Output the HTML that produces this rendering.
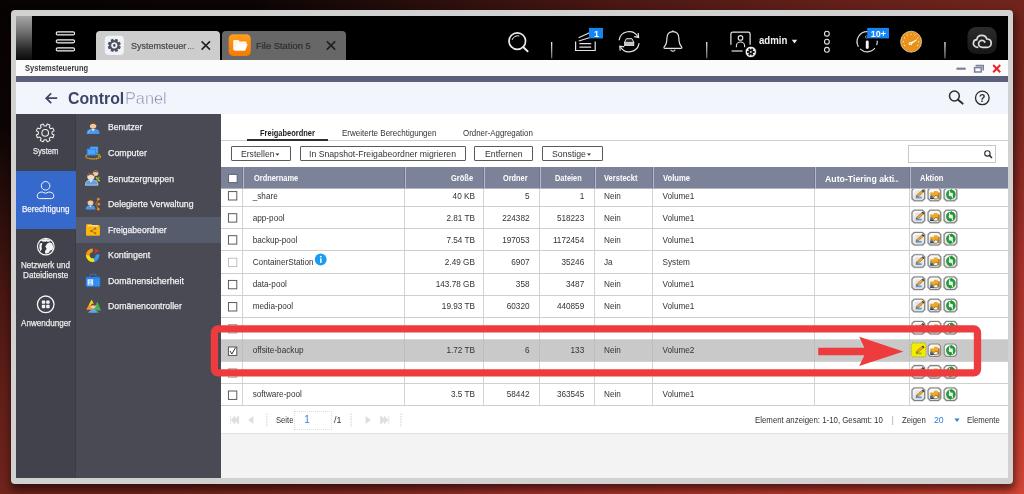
<!DOCTYPE html>
<html lang="de"><head><meta charset="utf-8"><title>Systemsteuerung</title><style>
*{box-sizing:border-box;margin:0;padding:0}
html,body{width:1024px;height:494px;overflow:hidden}
body{position:relative;font-family:"Liberation Sans",sans-serif;
 background:radial-gradient(ellipse 1024px 494px at 0 0,#070303 0%,#0c0505 25%,#260d0b 40%,#4a1713 60%,#611f19 80%,#70241c 100%,#a3312a 112%,#c53d2f 132%,#d24636 141%);}
.abs,.t,svg{position:absolute}
.t{white-space:nowrap;line-height:1;transform-origin:0 50%;}
#frame{left:11px;top:10px;width:1002px;height:474px;background:#d1d1d1;border-radius:4px;box-shadow:1px 5px 9px 1px rgba(15,0,0,.6)}
#inner{left:16px;top:16px;width:992px;height:462px;background:#fff;overflow:hidden}
#topbar{left:16px;top:16px;width:992px;height:44px;background:#000}
#grad{left:16px;top:16px;width:16px;height:44px;background:linear-gradient(#a6a6a6 0%,#8a8a8a 20%,#585858 50%,#2a2a2a 76%,#0a0a0a 100%)}
#tab1{left:96px;top:31px;width:124px;height:29px;background:#cdcdcd;border-radius:4px 4px 0 0}
#tab2{left:221.5px;top:31px;width:124.5px;height:29px;background:#676767;border-radius:4px 4px 0 0}
#titlestrip{left:16px;top:60px;width:992px;height:16px;background:#fbfbfb}
#darkline{left:16px;top:76px;width:992px;height:6px;background:#5b5f79}
#header{left:16px;top:82px;width:992px;height:32px;background:#f2f5fc}
#side1{left:16px;top:114px;width:60px;height:364px;background:#41424b;border-right:1.5px solid #3b3c44}
#side1sel{left:16px;top:171px;width:60px;height:58px;background:#3569cc}
#side2{left:76px;top:114px;width:145px;height:364px;background:#494a54}
#side2sel{left:76px;top:217px;width:145px;height:25.5px;background:#575c6d}
#content{left:221px;top:114px;width:787px;height:364px;background:#fff}
#tabline{left:221px;top:140px;width:787px;height:1px;background:#cfcfcf}
#tabul{left:247px;top:139px;width:81px;height:2px;background:#2f2f2f}
.btn{height:15px;top:146px;border:1px solid #5a5a5a;background:#fff;border-radius:1px}
#thead{left:221px;top:167px;width:787px;height:22px;background:#7c8298;border-bottom:1px solid #b0b4c4}
.hsep{top:167px;width:1px;height:21px;background:#b4b8c8}
.csep{top:189px;width:1px;height:217px;background:#d4d4d4}
.rsep{left:221px;width:787px;height:1px;background:#cfcfcf}
.cb{width:9px;height:9px;border:1px solid #4a4a4a;background:#fff;left:228px}
#pager{left:221px;top:406px;width:787px;height:27px;background:#fff}
#below{left:221px;top:433px;width:787px;height:45px;background:#f3f3f3;border-top:1px solid #e2e2e2}
#searchbox{left:908px;top:145px;width:88px;height:17.5px;border:1px solid #c8c8c8;background:#fff}
#pginput{left:293.5px;top:410.5px;width:38px;height:19px;border:1px dotted #dcdcdc;background:#fff}
</style></head><body>
<div id="frame" class="abs"></div>
<div id="inner" class="abs"></div>
<div id="topbar" class="abs"></div><div id="grad" class="abs"></div>
<div id="tab1" class="abs"></div><div id="tab2" class="abs"></div>
<div id="titlestrip" class="abs"></div><div id="darkline" class="abs"></div><div id="header" class="abs"></div>
<div id="side1" class="abs"></div><div id="side1sel" class="abs"></div>
<div id="side2" class="abs"></div><div id="side2sel" class="abs"></div>
<div id="content" class="abs"></div>
<div id="tabline" class="abs"></div><div id="tabul" class="abs"></div>
<div class="abs btn" style="left:230.7px;width:60.30000000000001px"></div>
<div class="abs btn" style="left:299.5px;width:166.0px"></div>
<div class="abs btn" style="left:474px;width:59px"></div>
<div class="abs btn" style="left:542px;width:61px"></div>
<div id="searchbox" class="abs"></div>
<div id="thead" class="abs"></div>
<div class="abs hsep" style="left:243px"></div><div class="abs hsep" style="left:242px;background:#6f7590"></div>
<div class="abs csep" style="left:242px"></div>
<div class="abs hsep" style="left:405px"></div><div class="abs hsep" style="left:404px;background:#6f7590"></div>
<div class="abs csep" style="left:404px"></div>
<div class="abs hsep" style="left:484px"></div><div class="abs hsep" style="left:483px;background:#6f7590"></div>
<div class="abs csep" style="left:483px"></div>
<div class="abs hsep" style="left:540px"></div><div class="abs hsep" style="left:539px;background:#6f7590"></div>
<div class="abs csep" style="left:539px"></div>
<div class="abs hsep" style="left:595px"></div><div class="abs hsep" style="left:594px;background:#6f7590"></div>
<div class="abs csep" style="left:594px"></div>
<div class="abs hsep" style="left:653px"></div><div class="abs hsep" style="left:652px;background:#6f7590"></div>
<div class="abs csep" style="left:652px"></div>
<div class="abs hsep" style="left:815px"></div><div class="abs hsep" style="left:814px;background:#6f7590"></div>
<div class="abs csep" style="left:814px"></div>
<div class="abs hsep" style="left:910px"></div><div class="abs hsep" style="left:909px;background:#6f7590"></div>
<div class="abs csep" style="left:909px"></div>
<div class="abs rsep" style="top:206.0px"></div>
<div class="abs rsep" style="top:228.0px"></div>
<div class="abs rsep" style="top:250.0px"></div>
<div class="abs rsep" style="top:273.0px"></div>
<div class="abs rsep" style="top:295.0px"></div>
<div class="abs rsep" style="top:317.0px"></div>
<div class="abs rsep" style="top:383.0px"></div>
<div class="abs rsep" style="top:405.0px"></div>
<div id="pager" class="abs"></div><div id="below" class="abs"></div>
<div id="pginput" class="abs"></div>
<svg style="left:0;top:0;will-change:transform" width="1024" height="494" viewBox="0 0 1024 494" font-family="Liberation Sans, sans-serif">
<defs>
<linearGradient id="gb" x1="0" y1="0" x2="0" y2="1"><stop offset="0" stop-color="#fdfdfd"/><stop offset="1" stop-color="#dedede"/></linearGradient>
<linearGradient id="gy" x1="0" y1="0" x2="0" y2="1"><stop offset="0" stop-color="#f7f23a"/><stop offset="1" stop-color="#e6d800"/></linearGradient>
<linearGradient id="go" x1="0" y1="0" x2="0" y2="1"><stop offset="0" stop-color="#ff9d1e"/><stop offset="1" stop-color="#f57a00"/></linearGradient>
<linearGradient id="gc" x1="0" y1="0" x2="0" y2="1"><stop offset="0" stop-color="#2c2c2c"/><stop offset="1" stop-color="#161616"/></linearGradient>
<linearGradient id="gs" x1="0" y1="0" x2="0" y2="1"><stop offset="0" stop-color="#f0f0f0"/><stop offset="1" stop-color="#666"/></linearGradient>
<g id="pencil"><rect x="4.4" y="3.5" width="6.6" height="7.6" fill="#dbe4ef"/><rect x="4.7" y="9.5" width="5.9" height="1.7" fill="#4aa0e8"/><path d="M11.7 4.1 L6.2 8.9" stroke="#9a6a1c" stroke-width="2.5"/><path d="M11.7 4.1 L6.2 8.9" stroke="#f2aa34" stroke-width="1.6"/><path d="M12.6 3.3 L11.5 4.3" stroke="#4e3220" stroke-width="2.4"/><path d="M6.4 8.7 L5.2 9.8" stroke="#d0503a" stroke-width="1.7"/><circle cx="5.4" cy="8.6" r=".6" fill="#4aa648"/></g>
<g id="pencily"><rect x="4.7" y="9.6" width="5.9" height="1.6" fill="#8ab82a"/><path d="M11.7 4.1 L6.2 8.9" stroke="#9a6a1c" stroke-width="2.5"/><path d="M11.7 4.1 L6.2 8.9" stroke="#f2aa34" stroke-width="1.6"/><path d="M12.6 3.3 L11.5 4.3" stroke="#4e3220" stroke-width="2.4"/><path d="M6.4 8.7 L5.2 9.8" stroke="#d0503a" stroke-width="1.7"/></g>
<g id="fold"><path d="M3.1 5.4 L3.1 11.6 L12.2 11.6 L12.2 5.2 L10.8 5.2 L10.3 3.8 L7.2 3.8 L6.6 5.4 Z" fill="#f5a623"/><path d="M11.5 5.2 H12.3 V11.6 H11.5 Z" fill="#6e4a1c"/><rect x="3.1" y="8.9" width="2.7" height="2.6" fill="#3a70c8"/><rect x="3.1" y="10.9" width="4" height=".8" fill="#222"/><circle cx="4.5" cy="8.3" r=".8" fill="#49a83c"/><path d="M6.2 10.2 L8.4 8.5 L10.6 8.7 L11 10.4 L9.2 11.8 L6.8 11.6 Z" fill="#f6f2e4" stroke="#4a4030" stroke-width=".55"/></g>
<g id="refr"><circle cx="7.7" cy="7.3" r="3.5" fill="none" stroke="#239c38" stroke-width="2.6"/><path d="M7.9 1.7 L11.6 4.4 L7.2 5.8 Z M7.5 12.9 L3.8 10.2 L8.2 8.8 Z" fill="#1f9a35"/><path d="M6.2 3.6 Q6.4 6.4 8 7.4 Q9.4 8.4 9.4 11" fill="none" stroke="#f4f4f4" stroke-width="1.1"/></g>
<g id="abtn"><path d="M2.8 .3 H11.8 L14.3 2.8 V11.7 L11.8 14.2 H2.8 L.3 11.7 V2.8 Z" fill="#d9d9d9" stroke="#d9d9d9" stroke-width=".8" stroke-linejoin="round"/><path d="M3.2 1 H11.4 L13.6 3.2 V11.3 L11.4 13.5 H3.2 L1 11.3 V3.2 Z" fill="url(#gb)" stroke="#808080" stroke-width="1.1" stroke-linejoin="round"/></g>
<g id="abtny"><rect x=".2" y="0" width="14.6" height="13.8" rx="1.6" fill="#f1ee00" stroke="#9c9a10" stroke-width=".8" stroke-dasharray="1 .8"/></g>
</defs>
<rect x="221" y="339.3" width="787" height="22.5" fill="#c9c9c9"/>
<rect x="242" y="339.3" width="1" height="22.5" fill="#bdbdbd"/>
<rect x="404" y="339.3" width="1" height="22.5" fill="#bdbdbd"/>
<rect x="483" y="339.3" width="1" height="22.5" fill="#bdbdbd"/>
<rect x="539" y="339.3" width="1" height="22.5" fill="#bdbdbd"/>
<rect x="594" y="339.3" width="1" height="22.5" fill="#bdbdbd"/>
<rect x="652" y="339.3" width="1" height="22.5" fill="#bdbdbd"/>
<rect x="814" y="339.3" width="1" height="22.5" fill="#bdbdbd"/>
<rect x="909" y="339.3" width="1" height="22.5" fill="#bdbdbd"/>
<rect x="56.2" y="31.90" width="18.4" height="3" rx="1.5" fill="#111" stroke="#f2f2f2" stroke-width="1.15"/>
<rect x="56.2" y="39.85" width="18.4" height="3" rx="1.5" fill="#111" stroke="#f2f2f2" stroke-width="1.15"/>
<rect x="56.2" y="47.90" width="18.4" height="3" rx="1.5" fill="#111" stroke="#f2f2f2" stroke-width="1.15"/>
<rect x="104.8" y="35.8" width="19.1" height="19.2" rx="4" fill="#f0f2f8"/>
<path d="M119.38 45.86 L120.88 46.65 L119.84 49.17 L118.22 48.66 L117.56 49.32 L118.07 50.94 L115.55 51.98 L114.76 50.48 L113.84 50.48 L113.05 51.98 L110.53 50.94 L111.04 49.32 L110.38 48.66 L108.76 49.17 L107.72 46.65 L109.22 45.86 L109.22 44.94 L107.72 44.15 L108.76 41.63 L110.38 42.14 L111.04 41.48 L110.53 39.86 L113.05 38.82 L113.84 40.32 L114.76 40.32 L115.55 38.82 L118.07 39.86 L117.56 41.48 L118.22 42.14 L119.84 41.63 L120.88 44.15 L119.38 44.94 Z M114.3 42.2 a3.2 3.2 0 1 0 0.01 0 Z" fill="#4b4f60" fill-rule="evenodd"/>
<circle cx="114.3" cy="45.4" r="1.3" fill="#4b4f60"/>
<path d="M201.6 41.4 L210.0 49.6 M210.0 41.4 L201.6 49.6" stroke="#1e1e1e" stroke-width="1.5" fill="none"/>
<path d="M326.8 41.4 L335.2 49.6 M335.2 41.4 L326.8 49.6" stroke="#1e1e1e" stroke-width="1.5" fill="none"/>
<rect x="228.7" y="34.2" width="22.1" height="21.8" rx="4.5" fill="url(#go)"/>
<path d="M233.2 41 L233.2 49.6 Q233.2 50.6 234.2 50.6 L244.4 50.6 L246.6 43.6 L246.6 42.4 Q246.6 41.6 245.8 41.6 L239.6 41.6 L238.4 40 L234.2 40 Q233.2 40 233.2 41 Z" fill="#fff5e6"/>
<path d="M234.6 50.6 L236.8 44 L247.6 44 L245.4 50.6 Z" fill="#fff"/>
<circle cx="517.3" cy="41.1" r="8.3" fill="none" stroke="#ececec" stroke-width="1.7"/>
<path d="M523.4 47.2 L527.6 51.3" stroke="#ececec" stroke-width="1.9" stroke-linecap="round"/>
<path d="M512.2 39.5 A5.6 5.6 0 0 1 519 35.9" stroke="#e9e9e9" stroke-width="1" fill="none" stroke-linecap="round"/>
<rect x="551.0" y="42" width="1.3" height="16.4" fill="url(#gs)"/>
<rect x="706.1" y="42" width="1.3" height="16.4" fill="url(#gs)"/>
<rect x="944.3" y="42" width="1.3" height="16.4" fill="url(#gs)"/>
<path d="M575.6 41.4 V50.5 H595.2 V41.4" fill="none" stroke="#e4e4e4" stroke-width="1.2"/>
<path d="M579.4 43.6 H591.2 M579.4 47.1 H591.2 M578.6 37.8 L590 32.4 M578.8 40.9 L590 37.4" stroke="#e4e4e4" stroke-width="1.1" fill="none"/>
<rect x="589" y="27.9" width="14" height="10.5" fill="#1585f3"/>
<path d="M619.10 40.29 A10.1 10.1 0 0 1 638.02 36.96" fill="none" stroke="#e4e4e4" stroke-width="1.2"/>
<path d="M639.10 43.11 A10.1 10.1 0 0 1 620.18 46.44" fill="none" stroke="#e4e4e4" stroke-width="1.2"/>
<path d="M634.2 36.6 L638.6 37.4 L638.2 33 " fill="none" stroke="#e4e4e4" stroke-width="1.2"/>
<path d="M624.2 46.8 L619.8 46.2 L620.2 50.6" fill="none" stroke="#e4e4e4" stroke-width="1.2"/>
<path d="M624.5 42.3 L626.3 38.7 H632 L633.8 42.3" fill="#222" stroke="#e4e4e4" stroke-width="1"/><rect x="624.5" y="42.3" width="9.3" height="3.3" fill="#c4c4c4" stroke="#e4e4e4" stroke-width=".8"/>
<path d="M672.9 31.6 C668.4 31.6 666.9 35.2 666.9 38.6 C666.9 43.4 665.6 45.4 664.2 46.8 C663.6 47.6 664 48.4 665 48.4 L680.8 48.4 C681.8 48.4 682.2 47.6 681.6 46.8 C680.2 45.4 678.9 43.4 678.9 38.6 C678.9 35.2 677.4 31.6 672.9 31.6 Z" fill="none" stroke="#e4e4e4" stroke-width="1.2"/>
<path d="M670.6 49.6 A2.4 2.2 0 0 0 675.2 49.6" fill="none" stroke="#e4e4e4" stroke-width="1.1"/>
<circle cx="672.9" cy="31" r=".7" fill="#e4e4e4"/>
<path d="M730.9 44.8 V34 Q730.9 32.1 732.8 32.1 H748.2 Q750.1 32.1 750.1 34 V44.8" fill="none" stroke="#e4e4e4" stroke-width="1.2"/>
<path d="M731.6 51 H742.6" stroke="#e4e4e4" stroke-width="1.2"/>
<circle cx="740.5" cy="37.9" r="2.3" fill="none" stroke="#e4e4e4" stroke-width="1.1"/>
<path d="M736.4 47.2 V45.6 A4.1 3.6 0 0 1 744.6 45.6 V47.2" fill="none" stroke="#e4e4e4" stroke-width="1.1"/>
<circle cx="750.8" cy="51.9" r="5.7" fill="#f4f4f4" stroke="#000" stroke-width=".8"/>
<path d="M753.11 50.95 L754.56 50.88 L754.56 52.92 L753.11 52.85 L752.78 53.43 L753.56 54.65 L751.80 55.67 L751.13 54.38 L750.47 54.38 L749.80 55.67 L748.04 54.65 L748.82 53.43 L748.49 52.85 L747.04 52.92 L747.04 50.88 L748.49 50.95 L748.82 50.37 L748.04 49.15 L749.80 48.13 L750.47 49.42 L751.13 49.42 L751.80 48.13 L753.56 49.15 L752.78 50.37 Z" fill="#111"/>
<circle cx="750.8" cy="51.9" r="0.9" fill="#f4f4f4"/>
<path d="M791.8 39.8 H797.2 L794.5 43.6 Z" fill="#eee"/>
<circle cx="826.9" cy="33.7" r="2.4" fill="none" stroke="#e4e4e4" stroke-width="1.1"/>
<circle cx="826.9" cy="41.7" r="2.4" fill="none" stroke="#e4e4e4" stroke-width="1.1"/>
<circle cx="826.9" cy="49.8" r="2.4" fill="none" stroke="#e4e4e4" stroke-width="1.1"/>
<path d="M858.45 46.75 A10.1 10.1 0 0 1 868.08 31.64" fill="none" stroke="#dcdcdc" stroke-width="1.2"/>
<path d="M874.94 48.19 A10.1 10.1 0 0 1 860.06 48.84" fill="none" stroke="#dcdcdc" stroke-width="1.2"/>
<path d="M877.26 40.82 A10.1 10.1 0 0 1 876.69 45.15" fill="none" stroke="#dcdcdc" stroke-width="1.2"/>
<rect x="865.8" y="40.6" width="2.9" height="8.3" rx="1.3" fill="#f4f4f4"/>
<circle cx="866.6" cy="37" r="1.2" fill="none" stroke="#bbb" stroke-width=".7"/>
<rect x="867.2" y="27.9" width="21.8" height="10.5" fill="#1585f3"/>
<circle cx="911.1" cy="41.7" r="10.5" fill="#e8921a" stroke="#f6e7cf" stroke-width=".7"/>
<circle cx="904.52" cy="45.50" r=".65" fill="#fbe9c9"/>
<circle cx="903.50" cy="41.70" r=".65" fill="#fbe9c9"/>
<circle cx="904.52" cy="37.90" r=".65" fill="#fbe9c9"/>
<circle cx="907.30" cy="35.12" r=".65" fill="#fbe9c9"/>
<circle cx="911.10" cy="34.10" r=".65" fill="#fbe9c9"/>
<circle cx="914.90" cy="35.12" r=".65" fill="#fbe9c9"/>
<circle cx="917.68" cy="37.90" r=".65" fill="#fbe9c9"/>
<circle cx="918.70" cy="41.70" r=".65" fill="#fbe9c9"/>
<circle cx="917.68" cy="45.50" r=".65" fill="#fbe9c9"/>
<path d="M909.4 43.6 L916.4 39.2 L917 40 L911 44.6 Z" fill="#fff"/><circle cx="910.4" cy="43.6" r="1.7" fill="#fff"/><circle cx="910.4" cy="43.6" r=".7" fill="#e8921a"/>
<rect x="967.5" y="26.9" width="29.2" height="27.2" rx="8.5" fill="url(#gc)"/>
<path d="M977.6 47.4 C974.4 47.2 973.2 44.8 973.4 43 C973.6 40.8 975.4 39.6 976.8 39.6 C977.2 37 979.4 35.4 981.8 35.4 C984.4 35.4 986.2 37 986.8 39 C989.4 39 991.2 40.8 991.2 43.2 C991.2 45.6 989.4 47.4 987 47.4 L982.4 47.4 C980 47.4 978.6 45.6 978.6 43.8 C978.6 41.8 980.2 40.4 982 40.4 C983.4 40.4 984.4 41.2 984.8 42" fill="none" stroke="#dedede" stroke-width="1.7" stroke-linecap="round"/>
<rect x="956.5" y="67.6" width="9.2" height="2.2" fill="#7d8299"/>
<path d="M975.6 65.6 H983.2 V70.6" fill="none" stroke="#7d8299" stroke-width="1.6"/><rect x="974.6" y="67.6" width="6.6" height="4.4" fill="none" stroke="#7d8299" stroke-width="1.5"/>
<path d="M993.2 65 L1000.2 72.2 M1000.2 65 L993.2 72.2" stroke="#ee2424" stroke-width="2" fill="none"/>
<path d="M46 98.2 H57.2 M51.2 93.4 L46.2 98.2 L51.2 103.2" fill="none" stroke="#3f4567" stroke-width="1.7"/>
<circle cx="954.4" cy="96" r="4.9" fill="none" stroke="#2d2d2d" stroke-width="1.5"/><path d="M958 99.8 L962.6 103.6" stroke="#2d2d2d" stroke-width="2" stroke-linecap="round"/>
<circle cx="982.3" cy="97.9" r="6.8" fill="none" stroke="#2d2d2d" stroke-width="1.3"/>
<text x="982.3" y="101.6" font-size="10.5" font-weight="700" text-anchor="middle" fill="#2d2d2d">?</text>
<path d="M52.02 133.93 L54.06 134.95 L52.92 137.72 L50.75 137.00 L49.30 138.45 L50.02 140.62 L47.25 141.76 L46.23 139.72 L44.17 139.72 L43.15 141.76 L40.38 140.62 L41.10 138.45 L39.65 137.00 L37.48 137.72 L36.34 134.95 L38.38 133.93 L38.38 131.87 L36.34 130.85 L37.48 128.08 L39.65 128.80 L41.10 127.35 L40.38 125.18 L43.15 124.04 L44.17 126.08 L46.23 126.08 L47.25 124.04 L50.02 125.18 L49.30 127.35 L50.75 128.80 L52.92 128.08 L54.06 130.85 L52.02 131.87 Z" fill="none" stroke="#f2f2f2" stroke-width="1.05" stroke-linejoin="round"/>
<circle cx="45.2" cy="132.9" r="3.3" fill="none" stroke="#f2f2f2" stroke-width="1.05"/>
<circle cx="45.6" cy="185.8" r="4.3" fill="none" stroke="#f4f6fc" stroke-width="1"/>
<path d="M39.6 198.6 Q37.2 198.6 37.2 196.4 Q37.2 192 42.4 192 Q45.6 194.6 48.8 192 Q53.8 192 53.8 196.4 Q53.8 198.6 51.4 198.6 Z" fill="none" stroke="#f4f6fc" stroke-width="1"/>
<circle cx="45.8" cy="246.6" r="8.3" fill="#34353d" stroke="#f4f4f4" stroke-width="1.25"/>
<path d="M40.6 240.8 Q45.8 237.4 51 240.8 Q48.4 242.4 46.8 241.2 Q44 242.6 40.6 240.8 Z" fill="#f4f4f4"/>
<path d="M39.5 244 Q41.6 242.2 42.5 243.6 L41.5 246 L41.9 249 L40.5 251.4 Q38.6 248 39.5 244 Z" fill="#f4f4f4"/>
<path d="M45.2 246.6 L47.2 243.4 L49.8 242.2 L52.2 243.6 Q54 246.8 52.6 249.8 L50.2 250.6 L48.8 252.8 L45.6 254 L44.8 251.6 L46.6 248.8 Z" fill="#f4f4f4"/>
<circle cx="45.7" cy="304.3" r="8.3" fill="none" stroke="#f4f4f4" stroke-width="1.3"/>
<rect x="41.8" y="300.4" width="3.4" height="3.4" rx=".7" fill="#f4f4f4"/>
<rect x="41.8" y="304.8" width="3.4" height="3.4" rx=".7" fill="#f4f4f4"/>
<rect x="46.2" y="300.4" width="3.4" height="3.4" rx=".7" fill="#f4f4f4"/>
<rect x="46.2" y="304.8" width="3.4" height="3.4" rx=".7" fill="#f4f4f4"/>
<g transform="translate(0 .6)"><path d="M86.6 133.4 Q86.6 128.6 90.8 128.4 L95.4 128.4 Q99.6 128.6 99.6 133.4 Z" fill="#4c98e6"/><path d="M88.2 132.6 Q88.6 129.8 91 129.4" stroke="#8cc0f4" stroke-width=".9" fill="none"/><path d="M91.6 128.4 L93.1 130.8 L94.6 128.4 Z" fill="#e9f1fb"/><circle cx="93.1" cy="125" r="3.2" fill="#f1c9a2"/><path d="M89.8 124.8 Q89.8 121.3 93.1 121.3 Q96.4 121.3 96.4 124.8 Q95 122.9 93.1 123.1 Q91.2 122.9 89.8 124.8 Z" fill="#6a4326"/></g>
<rect x="89.8" y="146.4" width="8.4" height="7.2" rx=".6" fill="#3b86da"/><rect x="90.6" y="147.2" width="6.8" height="5.4" fill="#66adf2"/>
<ellipse cx="93.1" cy="156.4" rx="7.3" ry="2.5" fill="none" stroke="#f0a21c" stroke-width="1.3" stroke-dasharray="1.6 .5"/>
<rect x="86.8" y="148.6" width="9.4" height="6.8" rx=".6" fill="#2a86ee"/><rect x="87.8" y="149.6" width="7.4" height="4.8" fill="#4da3f6"/><path d="M97.6 156.6 L99.8 155.4" stroke="#58b13c" stroke-width="1.5"/>
<circle cx="95.6" cy="173.2" r="2.5" fill="#f1c9a2" stroke="#e8e8e8" stroke-width=".5"/><path d="M93.2 172.8 Q93.4 170.4 95.6 170.4 Q97.8 170.4 98 172.8 Q95.6 171.4 93.2 172.8 Z" fill="#7a5030"/><path d="M96.2 177.6 L99.6 181.2" stroke="#f6c81a" stroke-width="1.5"/><path d="M99.4 176.8 L96.4 181.4" stroke="#58b13c" stroke-width="1.5"/>
<path d="M85.4 185.2 Q85.4 180.6 89.2 180.4 L93.6 180.4 Q98 180.6 98 185.2 Z" fill="#5aa0e8" stroke="#eef3fa" stroke-width=".6"/><path d="M89.6 180.6 L91 182.8 L92.4 180.6 Z" fill="#e9f1fb"/><circle cx="90.9" cy="176.7" r="3.3" fill="#f6dcc0" stroke="#f2f2f2" stroke-width=".6"/><path d="M87.6 176.4 Q87.6 173 90.9 173 Q94.2 173 94.2 176.4 Q92.8 174.6 90.9 174.8 Q89 174.6 87.6 176.4 Z" fill="#7a5030"/>
<circle cx="90.5" cy="202.4" r="2.9" fill="#f1c9a2"/><path d="M87.6 202 Q87.6 199 90.5 199 Q93.4 199 93.4 202 Q92 200.4 90.5 200.6 Q89 200.4 87.6 202 Z" fill="#6a4326"/><path d="M85.6 209.6 Q85.6 205.6 88.8 205.4 L92.2 205.4 Q95.4 205.6 95.4 209.6 Z" fill="#4c98e6"/><path d="M89.4 205.4 L90.5 207.2 L91.6 205.4 Z" fill="#e9f1fb"/>
<path d="M95.2 204.2 L97.6 204.2 M96.4 203 L98 199.8 M96.4 205.4 L98 208.6" stroke="#f08a1c" stroke-width=".9" fill="none" stroke-dasharray="1.2 .5"/><circle cx="98.3" cy="199.2" r="1.35" fill="#f08a1c"/><circle cx="98.8" cy="204.2" r="1.35" fill="#f08a1c"/><circle cx="98.3" cy="209.2" r="1.35" fill="#f08a1c"/>
<path d="M86 225.2 Q86 224 87.2 224 L91.2 224 L92.4 225 L98.6 225 Q99.8 225 99.8 226.2 L99.8 234.4 Q99.8 235.6 98.6 235.6 L87.2 235.6 Q86 235.6 86 234.4 Z" fill="#f0a408"/><rect x="87.6" y="225.2" width="10.6" height="1.6" fill="#fbe9c0"/><rect x="86" y="226.6" width="13.8" height="9" rx="1" fill="#fdb60c"/>
<path d="M95.2 228.6 L91.2 230.9 L95.2 233.2" fill="none" stroke="#a8640a" stroke-width=".8"/><circle cx="95.3" cy="228.5" r="1" fill="#a8640a"/><circle cx="91.1" cy="230.9" r="1" fill="#a8640a"/><circle cx="95.3" cy="233.3" r="1" fill="#a8640a"/>
<path d="M87.72 255.73 A4.9 4.9 0 0 1 92.77 250.40" fill="none" stroke="#f69a12" stroke-width="3.7"/>
<path d="M94.28 259.90 A4.9 4.9 0 0 1 87.70 255.30" fill="none" stroke="#f6e01a" stroke-width="3.7"/>
<path d="M97.39 254.28 A4.9 4.9 0 0 1 94.11 259.96" fill="none" stroke="#2f9af0" stroke-width="3.7"/>
<path d="M94.4 248.6 L99.4 250.6 L95.2 253.8 Z" fill="#d8322a"/>
<path d="M90 277.2 V275.4 Q90 274.3 91.1 274.3 H94.9 Q96 274.3 96 275.4 V277.2" fill="none" stroke="#2a84ee" stroke-width="1.1" stroke-dasharray="1.2 .5"/><rect x="85.8" y="277" width="14.4" height="9.8" rx=".8" fill="#2583ee"/><rect x="87.5" y="279.2" width="5.7" height="6.2" fill="#d6e9ff"/><circle cx="90.3" cy="281.4" r="1.1" fill="#8cbcf2"/><path d="M88.4 285.4 Q88.4 283 90.3 283 Q92.2 283 92.2 285.4 Z" fill="#8cbcf2"/><path d="M95 279.4 V285.4 M96.8 279.4 V285.4 M98.6 279.4 V285.4" stroke="#69b0f8" stroke-width=".9" stroke-dasharray=".9 .9"/>
<path d="M91.6 299.8 L96.8 309.8 L86.2 309.8 Z" fill="#f39a1e"/><path d="M91.6 299.8 L94.4 305.2 L88.8 305.2 Z" fill="#f2d21c"/><path d="M97.2 301.4 L101 310.6 L93.2 310.6 Z" fill="#4caf50"/><path d="M87.4 312.6 Q93 308.6 99.4 312.6 Z" fill="#6ab4f2"/><circle cx="93.2" cy="306.2" r="2.4" fill="#f1c9a2"/><path d="M90.8 305.8 Q91 303.6 93.2 303.6 Q95.4 303.6 95.6 305.8 Q93.2 304.6 90.8 305.8 Z" fill="#6a4326"/><path d="M90 312.4 Q90 309 93.2 309 Q96.4 309 96.4 312.4 Z" fill="#5aa9f0"/>
<path d="M275.4 153.4 H279.4 L277.4 155.8 Z" fill="#333"/><path d="M587 153.4 H591 L589 155.8 Z" fill="#333"/>
<circle cx="987.4" cy="153.4" r="2.7" fill="none" stroke="#2d2d2d" stroke-width="1.1"/><path d="M989.4 155.4 L992 158" stroke="#2d2d2d" stroke-width="1.5"/>
<rect x="228.6" y="174.4" width="8.5" height="8.2" fill="#fff" stroke="#5a5d70" stroke-width=".9"/>
<rect x="228.4" y="191.6" width="8.4" height="8.4" fill="#fff" stroke="#4a4a4a" stroke-width=".9"/>
<rect x="228.4" y="213.7" width="8.4" height="8.4" fill="#fff" stroke="#4a4a4a" stroke-width=".9"/>
<rect x="228.4" y="235.7" width="8.4" height="8.4" fill="#fff" stroke="#4a4a4a" stroke-width=".9"/>
<rect x="228.4" y="258.2" width="8.4" height="8.4" fill="#fff" stroke="#b8b8b8" stroke-width=".9"/>
<rect x="228.4" y="280.4" width="8.4" height="8.4" fill="#fff" stroke="#4a4a4a" stroke-width=".9"/>
<rect x="228.4" y="302.6" width="8.4" height="8.4" fill="#fff" stroke="#4a4a4a" stroke-width=".9"/>
<rect x="228.4" y="347.0" width="8.4" height="8.4" fill="#fff" stroke="#4a4a4a" stroke-width=".9"/>
<rect x="228.4" y="391.0" width="8.4" height="8.4" fill="#fff" stroke="#4a4a4a" stroke-width=".9"/>
<rect x="228.4" y="324.6" width="8.4" height="8.4" fill="#fff" stroke="#9a9a9a" stroke-width=".9"/>
<rect x="228.4" y="368.8" width="8.4" height="8.4" fill="#fff" stroke="#9a9a9a" stroke-width=".9"/>
<path d="M230 351 L231.8 354 L235.6 347.6" fill="none" stroke="#333" stroke-width="1"/>
<circle cx="320.7" cy="259.5" r="5.9" fill="#1a9df0"/><rect x="320" y="258.4" width="1.6" height="4.4" fill="#fff"/><circle cx="320.8" cy="256.6" r=".9" fill="#fff"/>
<g transform="translate(911.05 187.2)"><use href="#abtn"/><use href="#pencil"/></g>
<g transform="translate(927.1 187.2)"><use href="#abtn"/><use href="#fold"/></g>
<g transform="translate(943.15 187.2)"><use href="#abtn"/><use href="#refr"/></g>
<g transform="translate(911.05 209.2)"><use href="#abtn"/><use href="#pencil"/></g>
<g transform="translate(927.1 209.2)"><use href="#abtn"/><use href="#fold"/></g>
<g transform="translate(943.15 209.2)"><use href="#abtn"/><use href="#refr"/></g>
<g transform="translate(911.05 231.5)"><use href="#abtn"/><use href="#pencil"/></g>
<g transform="translate(927.1 231.5)"><use href="#abtn"/><use href="#fold"/></g>
<g transform="translate(943.15 231.5)"><use href="#abtn"/><use href="#refr"/></g>
<g transform="translate(911.05 253.8)"><use href="#abtn"/><use href="#pencil"/></g>
<g transform="translate(927.1 253.8)"><use href="#abtn"/><use href="#fold"/></g>
<g transform="translate(943.15 253.8)"><use href="#abtn"/><use href="#refr"/></g>
<g transform="translate(911.05 276.0)"><use href="#abtn"/><use href="#pencil"/></g>
<g transform="translate(927.1 276.0)"><use href="#abtn"/><use href="#fold"/></g>
<g transform="translate(943.15 276.0)"><use href="#abtn"/><use href="#refr"/></g>
<g transform="translate(911.05 298.3)"><use href="#abtn"/><use href="#pencil"/></g>
<g transform="translate(927.1 298.3)"><use href="#abtn"/><use href="#fold"/></g>
<g transform="translate(943.15 298.3)"><use href="#abtn"/><use href="#refr"/></g>
<g transform="translate(911.05 320.5)"><use href="#abtn"/><use href="#pencil"/></g>
<g transform="translate(927.1 320.5)"><use href="#abtn"/><use href="#fold"/></g>
<g transform="translate(943.15 320.5)"><use href="#abtn"/><use href="#refr"/></g>
<g transform="translate(911.05 343.0)"><use href="#abtny"/><use href="#pencily"/></g>
<g transform="translate(927.1 343.0)"><use href="#abtn"/><use href="#fold"/></g>
<g transform="translate(943.15 343.0)"><use href="#abtn"/><use href="#refr"/></g>
<g transform="translate(911.05 364.6)"><use href="#abtn"/><use href="#pencil"/></g>
<g transform="translate(927.1 364.6)"><use href="#abtn"/><use href="#fold"/></g>
<g transform="translate(943.15 364.6)"><use href="#abtn"/><use href="#refr"/></g>
<g transform="translate(911.05 387.0)"><use href="#abtn"/><use href="#pencil"/></g>
<g transform="translate(927.1 387.0)"><use href="#abtn"/><use href="#fold"/></g>
<g transform="translate(943.15 387.0)"><use href="#abtn"/><use href="#refr"/></g>
<rect x="911" y="167" width="97" height="21" fill="#7c8298"/><rect x="911" y="188" width="97" height="1" fill="#b0b4c4"/>
<path d="M230.6 416 V424 M234.6 420 L238.6 416 V424 Z M231.2 420 L235 416.2 V423.8 Z" fill="#dedede" stroke="#dedede" stroke-width=".8"/>
<path d="M248.2 420 L253.4 416 V424 Z" fill="#dedede"/>
<path d="M371 420 L365.6 416 V424 Z" fill="#dedede"/>
<path d="M388.8 416 V424 M384.8 420 L380.6 416 V424 Z M388.2 420 L384.4 416.2 V423.8 Z" fill="#dedede" stroke="#dedede" stroke-width=".8"/>
<path d="M266.8 413.6 V427" stroke="#d4d0c8" stroke-width="1" stroke-dasharray="1.5 1"/>
<path d="M351.1 413.6 V427" stroke="#d4d0c8" stroke-width="1" stroke-dasharray="1.5 1"/>
<path d="M401.0 413.6 V427" stroke="#d4d0c8" stroke-width="1" stroke-dasharray="1.5 1"/>
<path d="M892.6 416 V425" stroke="#c9c3b8" stroke-width="1.1"/>
<path d="M954.4 418.6 H959.6 L957 422 Z" fill="#2f7fe0"/>
</svg>
<div class="abs" id="txt" style="left:0;top:0;width:1024px;height:494px;will-change:transform">
<span class="t" id="t0" style="left:130.60px;top:41.00px;font-size:9.8px;font-weight:400;color:#454545;transform:scaleX(0.9217);-webkit-text-stroke:.2px #454545;">Systemsteuer</span>
<span class="t" id="t1" style="left:187.00px;top:41.00px;font-size:9.8px;font-weight:400;color:#454545;transform:scaleX(0.7600);">…</span>
<span class="t" id="t2" style="left:255.70px;top:41.00px;font-size:9.8px;font-weight:400;color:#2e2e2e;transform:scaleX(0.9579);-webkit-text-stroke:.2px #2e2e2e;">File Station 5</span>
<span class="t" id="t3" style="left:758.90px;top:35.00px;font-size:10.5px;font-weight:700;color:#f2f2f2;transform:scaleX(0.9194);">admin</span>
<span class="t" id="t4" style="left:594.00px;top:30.00px;font-size:9px;font-weight:700;color:#fff;transform:scaleX(1.0000);">1</span>
<span class="t" id="t5" style="left:870.80px;top:30.00px;font-size:9px;font-weight:700;color:#fff;transform:scaleX(1.0000);">10+</span>
<span class="t" id="t6" style="left:25.20px;top:64.00px;font-size:8.5px;font-weight:700;color:#3a3a3a;transform:scaleX(0.8845);">Systemsteuerung</span>
<span class="t" id="t7" style="left:68.00px;top:90.00px;font-size:16.5px;font-weight:700;color:#3f4567;transform:scaleX(0.9593);">Control</span>
<span class="t" id="t8" style="left:124.50px;top:90.00px;font-size:16.5px;font-weight:400;color:#7c84a2;transform:scaleX(0.9881);-webkit-text-stroke:.5px #f2f5fc;">Panel</span>
<span class="t" id="t9" style="left:33.00px;top:147.00px;font-size:8.5px;font-weight:400;color:#e6e6e6;transform:scaleX(0.8929);-webkit-text-stroke:.25px #eee;">System</span>
<span class="t" id="t10" style="left:21.70px;top:205.00px;font-size:8.5px;font-weight:400;color:#fff;transform:scaleX(0.9460);-webkit-text-stroke:.25px #eee;">Berechtigung</span>
<span class="t" id="t11" style="left:21.00px;top:261.00px;font-size:8.5px;font-weight:400;color:#e6e6e6;transform:scaleX(0.9423);-webkit-text-stroke:.25px #eee;">Netzwerk und</span>
<span class="t" id="t12" style="left:23.00px;top:271.00px;font-size:8.5px;font-weight:400;color:#e6e6e6;transform:scaleX(0.9574);-webkit-text-stroke:.25px #eee;">Dateidienste</span>
<span class="t" id="t13" style="left:20.50px;top:319.00px;font-size:8.5px;font-weight:400;color:#e6e6e6;transform:scaleX(0.9519);-webkit-text-stroke:.25px #eee;">Anwendunger</span>
<span class="t" id="t14" style="left:107.80px;top:123.00px;font-size:9.2px;font-weight:400;color:#f2f2f2;transform:scaleX(0.9324);-webkit-text-stroke:.25px #f2f2f2;">Benutzer</span>
<span class="t" id="t15" style="left:107.80px;top:149.00px;font-size:9.2px;font-weight:400;color:#f2f2f2;transform:scaleX(0.9625);-webkit-text-stroke:.25px #f2f2f2;">Computer</span>
<span class="t" id="t16" style="left:107.80px;top:175.00px;font-size:9.2px;font-weight:400;color:#f2f2f2;transform:scaleX(0.9352);-webkit-text-stroke:.25px #f2f2f2;">Benutzergruppen</span>
<span class="t" id="t17" style="left:107.80px;top:200.00px;font-size:9.2px;font-weight:400;color:#f2f2f2;transform:scaleX(0.9522);-webkit-text-stroke:.25px #f2f2f2;">Delegierte Verwaltung</span>
<span class="t" id="t18" style="left:107.80px;top:226.00px;font-size:9.2px;font-weight:400;color:#f2f2f2;transform:scaleX(0.9349);-webkit-text-stroke:.25px #f2f2f2;">Freigabeordner</span>
<span class="t" id="t19" style="left:107.80px;top:251.00px;font-size:9.2px;font-weight:400;color:#f2f2f2;transform:scaleX(0.9591);-webkit-text-stroke:.25px #f2f2f2;">Kontingent</span>
<span class="t" id="t20" style="left:107.80px;top:277.00px;font-size:9.2px;font-weight:400;color:#f2f2f2;transform:scaleX(0.9582);-webkit-text-stroke:.25px #f2f2f2;">Domänensicherheit</span>
<span class="t" id="t21" style="left:107.80px;top:302.00px;font-size:9.2px;font-weight:400;color:#f2f2f2;transform:scaleX(0.9513);-webkit-text-stroke:.25px #f2f2f2;">Domänencontroller</span>
<span class="t" id="t22" style="left:260.00px;top:129.00px;font-size:8.5px;font-weight:700;color:#222;transform:scaleX(0.8806);">Freigabeordner</span>
<span class="t" id="t23" style="left:341.50px;top:129.00px;font-size:8.5px;font-weight:400;color:#333;transform:scaleX(0.9430);">Erweiterte Berechtigungen</span>
<span class="t" id="t24" style="left:462.50px;top:129.00px;font-size:8.5px;font-weight:400;color:#333;transform:scaleX(0.9293);">Ordner-Aggregation</span>
<span class="t" id="t25" style="left:240.60px;top:149.00px;font-size:9.5px;font-weight:400;color:#333;transform:scaleX(0.9054);">Erstellen</span>
<span class="t" id="t26" style="left:309.40px;top:149.00px;font-size:9.5px;font-weight:400;color:#333;transform:scaleX(0.9124);">In Snapshot-Freigabeordner migrieren</span>
<span class="t" id="t27" style="left:485.00px;top:149.00px;font-size:9.5px;font-weight:400;color:#333;transform:scaleX(0.9146);">Entfernen</span>
<span class="t" id="t28" style="left:551.50px;top:149.00px;font-size:9.5px;font-weight:400;color:#333;transform:scaleX(0.9189);">Sonstige</span>
<span class="t" id="t29" style="left:253.50px;top:174.00px;font-size:8.5px;font-weight:700;color:#fff;transform:scaleX(0.8725);">Ordnername</span>
<span class="t" id="t30" style="left:450.80px;top:174.00px;font-size:8.5px;font-weight:700;color:#fff;transform:scaleX(0.8840);">Größe</span>
<span class="t" id="t31" style="left:502.80px;top:174.00px;font-size:8.5px;font-weight:700;color:#fff;transform:scaleX(0.8643);">Ordner</span>
<span class="t" id="t32" style="left:555.40px;top:174.00px;font-size:8.5px;font-weight:700;color:#fff;transform:scaleX(0.8677);">Dateien</span>
<span class="t" id="t33" style="left:604.40px;top:174.00px;font-size:8.5px;font-weight:700;color:#fff;transform:scaleX(0.8842);">Versteckt</span>
<span class="t" id="t34" style="left:663.00px;top:174.00px;font-size:8.5px;font-weight:700;color:#fff;transform:scaleX(0.9000);">Volume</span>
<span class="t" id="t35" style="left:824.60px;top:174.00px;font-size:9.8px;font-weight:700;color:#fff;transform:scaleX(0.8923);">Auto-Tiering akti</span>
<span class="t" id="t36" style="left:894.40px;top:174.00px;font-size:9.8px;font-weight:700;color:#fff;transform:scaleX(0.4800);">…</span>
<span class="t" id="t37" style="left:920.00px;top:174.00px;font-size:8.5px;font-weight:700;color:#fff;transform:scaleX(0.8846);">Aktion</span>
<span class="t" id="t38" style="left:252.70px;top:193.00px;font-size:8.2px;font-weight:400;color:#333;transform:scaleX(1.0000);">_share</span>
<span class="t" id="t39" style="right:549.10px;transform-origin:100% 50%;top:193.00px;font-size:8.2px;font-weight:400;color:#333;transform:scaleX(1.0000);">40 KB</span>
<span class="t" id="t40" style="right:494.50px;transform-origin:100% 50%;top:193.00px;font-size:8.2px;font-weight:400;color:#333;transform:scaleX(1.0000);">5</span>
<span class="t" id="t41" style="right:439.80px;transform-origin:100% 50%;top:193.00px;font-size:8.2px;font-weight:400;color:#333;transform:scaleX(1.0000);">1</span>
<span class="t" id="t42" style="left:604.00px;top:193.00px;font-size:8.2px;font-weight:400;color:#333;transform:scaleX(1.0000);">Nein</span>
<span class="t" id="t43" style="left:662.50px;top:193.00px;font-size:8.2px;font-weight:400;color:#333;transform:scaleX(1.0000);">Volume1</span>
<span class="t" id="t44" style="left:252.70px;top:215.00px;font-size:8.2px;font-weight:400;color:#333;transform:scaleX(1.0000);">app-pool</span>
<span class="t" id="t45" style="right:549.10px;transform-origin:100% 50%;top:215.00px;font-size:8.2px;font-weight:400;color:#333;transform:scaleX(1.0000);">2.81 TB</span>
<span class="t" id="t46" style="right:494.50px;transform-origin:100% 50%;top:215.00px;font-size:8.2px;font-weight:400;color:#333;transform:scaleX(1.0000);">224382</span>
<span class="t" id="t47" style="right:439.80px;transform-origin:100% 50%;top:215.00px;font-size:8.2px;font-weight:400;color:#333;transform:scaleX(1.0000);">518223</span>
<span class="t" id="t48" style="left:604.00px;top:215.00px;font-size:8.2px;font-weight:400;color:#333;transform:scaleX(1.0000);">Nein</span>
<span class="t" id="t49" style="left:662.50px;top:215.00px;font-size:8.2px;font-weight:400;color:#333;transform:scaleX(1.0000);">Volume1</span>
<span class="t" id="t50" style="left:252.70px;top:237.00px;font-size:8.2px;font-weight:400;color:#333;transform:scaleX(1.0000);">backup-pool</span>
<span class="t" id="t51" style="right:549.10px;transform-origin:100% 50%;top:237.00px;font-size:8.2px;font-weight:400;color:#333;transform:scaleX(1.0000);">7.54 TB</span>
<span class="t" id="t52" style="right:494.50px;transform-origin:100% 50%;top:237.00px;font-size:8.2px;font-weight:400;color:#333;transform:scaleX(1.0000);">197053</span>
<span class="t" id="t53" style="right:439.80px;transform-origin:100% 50%;top:237.00px;font-size:8.2px;font-weight:400;color:#333;transform:scaleX(1.0000);">1172454</span>
<span class="t" id="t54" style="left:604.00px;top:237.00px;font-size:8.2px;font-weight:400;color:#333;transform:scaleX(1.0000);">Nein</span>
<span class="t" id="t55" style="left:662.50px;top:237.00px;font-size:8.2px;font-weight:400;color:#333;transform:scaleX(1.0000);">Volume1</span>
<span class="t" id="t56" style="left:252.70px;top:259.00px;font-size:8.2px;font-weight:400;color:#333;transform:scaleX(1.0000);">ContainerStation</span>
<span class="t" id="t57" style="right:549.10px;transform-origin:100% 50%;top:259.00px;font-size:8.2px;font-weight:400;color:#333;transform:scaleX(1.0000);">2.49 GB</span>
<span class="t" id="t58" style="right:494.50px;transform-origin:100% 50%;top:259.00px;font-size:8.2px;font-weight:400;color:#333;transform:scaleX(1.0000);">6907</span>
<span class="t" id="t59" style="right:439.80px;transform-origin:100% 50%;top:259.00px;font-size:8.2px;font-weight:400;color:#333;transform:scaleX(1.0000);">35246</span>
<span class="t" id="t60" style="left:604.00px;top:259.00px;font-size:8.2px;font-weight:400;color:#333;transform:scaleX(1.0000);">Ja</span>
<span class="t" id="t61" style="left:662.50px;top:259.00px;font-size:8.2px;font-weight:400;color:#333;transform:scaleX(1.0000);">System</span>
<span class="t" id="t62" style="left:252.70px;top:281.00px;font-size:8.2px;font-weight:400;color:#333;transform:scaleX(1.0000);">data-pool</span>
<span class="t" id="t63" style="right:549.10px;transform-origin:100% 50%;top:281.00px;font-size:8.2px;font-weight:400;color:#333;transform:scaleX(1.0000);">143.78 GB</span>
<span class="t" id="t64" style="right:494.50px;transform-origin:100% 50%;top:281.00px;font-size:8.2px;font-weight:400;color:#333;transform:scaleX(1.0000);">358</span>
<span class="t" id="t65" style="right:439.80px;transform-origin:100% 50%;top:281.00px;font-size:8.2px;font-weight:400;color:#333;transform:scaleX(1.0000);">3487</span>
<span class="t" id="t66" style="left:604.00px;top:281.00px;font-size:8.2px;font-weight:400;color:#333;transform:scaleX(1.0000);">Nein</span>
<span class="t" id="t67" style="left:662.50px;top:281.00px;font-size:8.2px;font-weight:400;color:#333;transform:scaleX(1.0000);">Volume1</span>
<span class="t" id="t68" style="left:252.70px;top:303.00px;font-size:8.2px;font-weight:400;color:#333;transform:scaleX(1.0000);">media-pool</span>
<span class="t" id="t69" style="right:549.10px;transform-origin:100% 50%;top:303.00px;font-size:8.2px;font-weight:400;color:#333;transform:scaleX(1.0000);">19.93 TB</span>
<span class="t" id="t70" style="right:494.50px;transform-origin:100% 50%;top:303.00px;font-size:8.2px;font-weight:400;color:#333;transform:scaleX(1.0000);">60320</span>
<span class="t" id="t71" style="right:439.80px;transform-origin:100% 50%;top:303.00px;font-size:8.2px;font-weight:400;color:#333;transform:scaleX(1.0000);">440859</span>
<span class="t" id="t72" style="left:604.00px;top:303.00px;font-size:8.2px;font-weight:400;color:#333;transform:scaleX(1.0000);">Nein</span>
<span class="t" id="t73" style="left:662.50px;top:303.00px;font-size:8.2px;font-weight:400;color:#333;transform:scaleX(1.0000);">Volume1</span>
<span class="t" id="t74" style="left:252.70px;top:347.00px;font-size:8.2px;font-weight:400;color:#333;transform:scaleX(1.0000);">offsite-backup</span>
<span class="t" id="t75" style="right:549.10px;transform-origin:100% 50%;top:347.00px;font-size:8.2px;font-weight:400;color:#333;transform:scaleX(1.0000);">1.72 TB</span>
<span class="t" id="t76" style="right:494.50px;transform-origin:100% 50%;top:347.00px;font-size:8.2px;font-weight:400;color:#333;transform:scaleX(1.0000);">6</span>
<span class="t" id="t77" style="right:439.80px;transform-origin:100% 50%;top:347.00px;font-size:8.2px;font-weight:400;color:#333;transform:scaleX(1.0000);">133</span>
<span class="t" id="t78" style="left:604.00px;top:347.00px;font-size:8.2px;font-weight:400;color:#333;transform:scaleX(1.0000);">Nein</span>
<span class="t" id="t79" style="left:662.50px;top:347.00px;font-size:8.2px;font-weight:400;color:#333;transform:scaleX(1.0000);">Volume2</span>
<span class="t" id="t80" style="left:252.70px;top:391.00px;font-size:8.2px;font-weight:400;color:#333;transform:scaleX(1.0000);">software-pool</span>
<span class="t" id="t81" style="right:549.10px;transform-origin:100% 50%;top:391.00px;font-size:8.2px;font-weight:400;color:#333;transform:scaleX(1.0000);">3.5 TB</span>
<span class="t" id="t82" style="right:494.50px;transform-origin:100% 50%;top:391.00px;font-size:8.2px;font-weight:400;color:#333;transform:scaleX(1.0000);">58442</span>
<span class="t" id="t83" style="right:439.80px;transform-origin:100% 50%;top:391.00px;font-size:8.2px;font-weight:400;color:#333;transform:scaleX(1.0000);">363545</span>
<span class="t" id="t84" style="left:604.00px;top:391.00px;font-size:8.2px;font-weight:400;color:#333;transform:scaleX(1.0000);">Nein</span>
<span class="t" id="t85" style="left:662.50px;top:391.00px;font-size:8.2px;font-weight:400;color:#333;transform:scaleX(1.0000);">Volume1</span>
<span class="t" id="t86" style="left:276.10px;top:416.00px;font-size:8.5px;font-weight:400;color:#333;transform:scaleX(0.9000);">Seite</span>
<span class="t" id="t87" style="left:304.20px;top:415.00px;font-size:10px;font-weight:400;color:#2f7fe0;transform:scaleX(1.0000);">1</span>
<span class="t" id="t88" style="left:333.60px;top:416.00px;font-size:8.5px;font-weight:400;color:#333;transform:scaleX(1.0571);">/1</span>
<span class="t" id="t89" style="left:755.30px;top:417.00px;font-size:8.2px;font-weight:400;color:#333;transform:scaleX(0.9586);">Element anzeigen: 1-10, Gesamt: 10</span>
<span class="t" id="t90" style="left:902.30px;top:417.00px;font-size:8.2px;font-weight:400;color:#333;transform:scaleX(0.9480);">Zeigen</span>
<span class="t" id="t91" style="left:933.70px;top:415.00px;font-size:9.8px;font-weight:400;color:#2f7fe0;transform:scaleX(0.8909);">20</span>
<span class="t" id="t92" style="left:967.30px;top:417.00px;font-size:8.2px;font-weight:400;color:#333;transform:scaleX(0.9457);">Elemente</span>
</div>
<svg style="left:0;top:0" width="1024" height="494" viewBox="0 0 1024 494"><rect x="214.4" y="328.95" width="763.1" height="43.9" rx="3.6" fill="none" stroke="#ee3b3e" stroke-width="7.3"/><polygon points="818.2,347.7 864.4,347.7 859.2,336.8 903.4,351.4 859.2,366.1 864.4,355.2 818.2,355.2" fill="#ee3b3e"/></svg>
</body></html>
